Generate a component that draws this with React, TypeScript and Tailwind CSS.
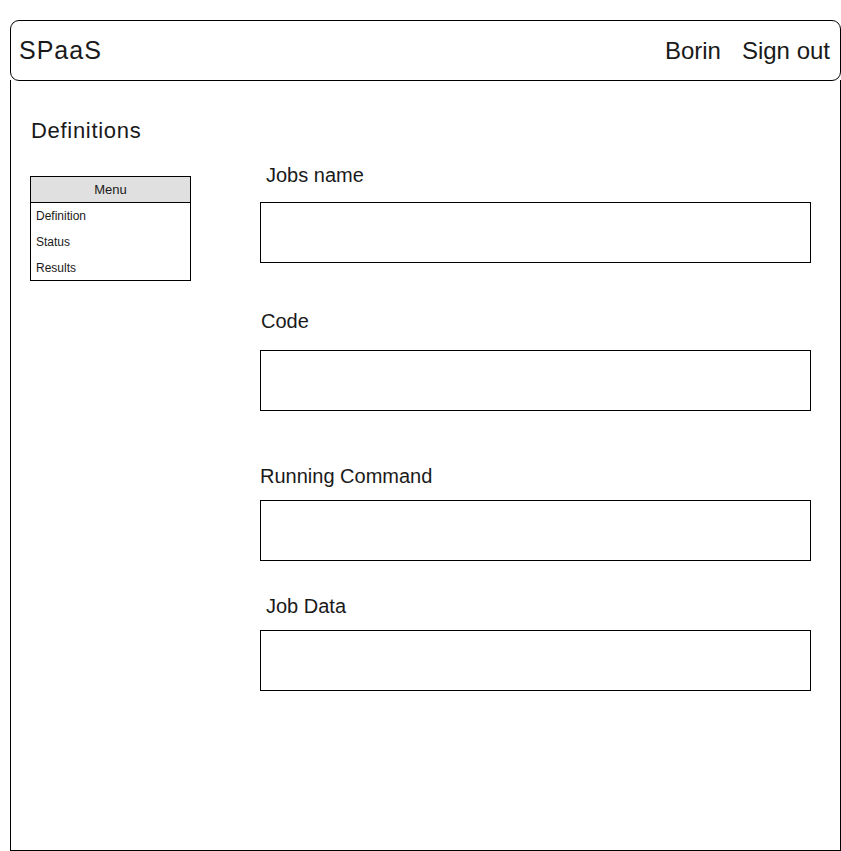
export default function App() {
  const fields = [
    { label: "Jobs name", lx: "pl-[6px]", mt: "mt-0", gap: "mt-[13px]" },
    { label: "Code", lx: "pl-[1px]", mt: "mt-[44px]", gap: "mt-[15px]" },
    { label: "Running Command", lx: "pl-0", mt: "mt-[51px]", gap: "mt-[10px]" },
    { label: "Job Data", lx: "pl-[6px]", mt: "mt-[31px]", gap: "mt-[10px]" },
  ];
  return (
    <div
      className="w-[841px] h-[851px] bg-white pt-[20px] pl-[10px] text-[#1a1a1a]"
      style={{ fontFamily: '"Liberation Sans", Arial, sans-serif' }}
    >
      <div className="w-[831px]">
        <div className="h-[61px] border border-black rounded-[9px] flex items-center justify-between pl-[8px] pr-[10px]">
          <span className="text-[25px] tracking-[1px]">SPaaS</span>
          <div className="flex gap-[21px] text-[24px]">
            <span>Borin</span>
            <span>Sign out</span>
          </div>
        </div>
        <div className="h-[771px] border-x border-b border-black -mt-[1px] flex">
          <div className="w-[249px] shrink-0 pl-[19px] pt-[36px]">
            <div className="text-[22px] leading-[30px] tracking-[0.7px] pl-[1px]">Definitions</div>
            <div className="mt-[30px] w-[161px] border border-black">
              <div className="h-[26px] bg-[#e0e0e0] border-b border-black flex items-center justify-center text-[13px]">
                Menu
              </div>
              <div className="text-[12px]">
                <div className="h-[26px] flex items-center pl-[5px]">Definition</div>
                <div className="h-[26px] flex items-center pl-[5px]">Status</div>
                <div className="h-[25px] flex items-center pl-[5px]">Results</div>
              </div>
            </div>
          </div>
          <div className="flex-1 pt-[81px]">
            {fields.map((f, i) => (
              <div key={i} className={f.mt}>
                <div className={`text-[20px] leading-[28px] ${f.lx}`}>{f.label}</div>
                <div className={`${f.gap} w-[551px] h-[61px] border border-black`} />
              </div>
            ))}
          </div>
        </div>
      </div>
    </div>
  );
}
